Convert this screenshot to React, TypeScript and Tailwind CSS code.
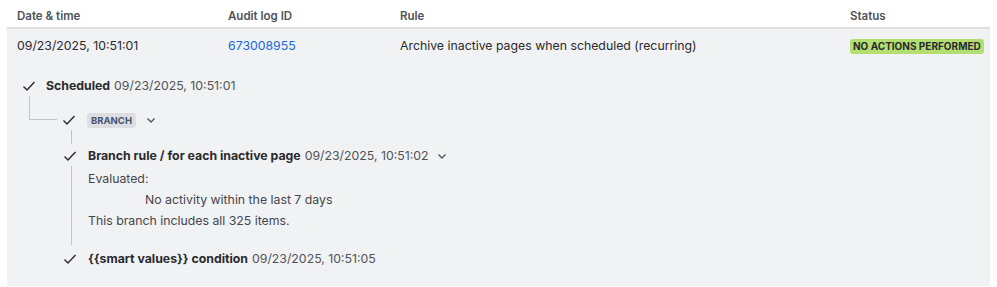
import React from "react";

function CheckIcon() {
  return (
    <svg width="14" height="14" viewBox="0 0 14 14" className="shrink-0">
      <path d="M1.5 7.5 L5 11 L12.5 3" fill="none" stroke="#292a2e" strokeWidth="1.4" />
    </svg>
  );
}

function Chevron() {
  return (
    <svg width="10" height="10" viewBox="0 0 10 10" className="shrink-0">
      <path d="M1.5 3.5 L5 7 L8.5 3.5" fill="none" stroke="#505258" strokeWidth="1.3" />
    </svg>
  );
}

export default function App() {
  return (
    <div className="w-[997px] h-[287px] bg-white text-[#292a2e] font-['Inter',sans-serif]">
      <div className="ml-[7px] w-[983px]">
        {/* header */}
        <div className="flex border-b-2 border-[#dddee1] pb-[3px] pt-[8px] text-[11.5px] font-semibold leading-[16px] text-[#505258]">
          <div className="w-[221px] pl-[10px]">Date &amp; time</div>
          <div className="w-[172px]">Audit log ID</div>
          <div className="w-[450px]">Rule</div>
          <div>Status</div>
        </div>

        <div className="bg-[#f1f2f4] pb-[17px]">
          {/* row */}
          <div className="flex h-[35px] items-center text-[12.3px]">
            <div className="w-[221px] pl-[10px]">09/23/2025, 10:51:01</div>
            <div className="w-[172px] text-[#1868db]">673008955</div>
            <div className="w-[450px]">Archive inactive pages when scheduled (recurring)</div>
            <div className="flex">
              <span className="inline-block whitespace-nowrap rounded-[3px] bg-[#b3df72] px-[3px] py-[1px] text-[10px] font-bold leading-[13px] text-[#292a2e]">
                NO ACTIONS PERFORMED
              </span>
            </div>
          </div>

          {/* tree */}
          <div className="mt-[12px] text-[12.3px]">
            <div className="flex h-[20px] items-center pl-[15px]">
              <CheckIcon />
              <span className="ml-[10px] font-bold">Scheduled</span>
              <span className="ml-[4px] text-[#505258]">09/23/2025, 10:51:01</span>
            </div>

            <div className="flex items-start">
              <div className="ml-[22px] h-[24px] w-[28px] border-b border-l border-[#c1c3c8]" />
              <div className="ml-[5px] mt-[16px] flex h-[16px] items-center">
                <CheckIcon />
                <span className="ml-[11px] rounded-[3px] bg-[#dddee1] px-[4px] text-[9.5px] font-bold leading-[15px] text-[#44546f]">
                  BRANCH
                </span>
                <span className="ml-[10px]">
                  <Chevron />
                </span>
              </div>
            </div>

            <div className="ml-[64px] mt-[2px] h-[14px] w-px bg-[#c1c3c8]" />

            <div className="mt-[2px] flex h-[20px] items-center pl-[56px]">
              <CheckIcon />
              <span className="ml-[11px] font-bold">Branch rule / for each inactive page</span>
              <span className="ml-[4px] text-[#505258]">09/23/2025, 10:51:02</span>
              <span className="ml-[8px]">
                <Chevron />
              </span>
            </div>

            <div className="ml-[64px] border-l border-[#c1c3c8] pb-[14px] pl-[16px] pt-[2px] leading-[21px] text-[#44464d]">
              <div>Evaluated:</div>
              <div className="pl-[57px]">No activity within the last 7 days</div>
              <div>This branch includes all 325 items.</div>
            </div>

            <div className="mt-[4px] flex h-[20px] items-center pl-[56px]">
              <CheckIcon />
              <span className="ml-[11px] font-bold">{"{{smart values}} condition"}</span>
              <span className="ml-[4px] text-[#505258]">09/23/2025, 10:51:05</span>
            </div>
          </div>
        </div>
      </div>
    </div>
  );
}
